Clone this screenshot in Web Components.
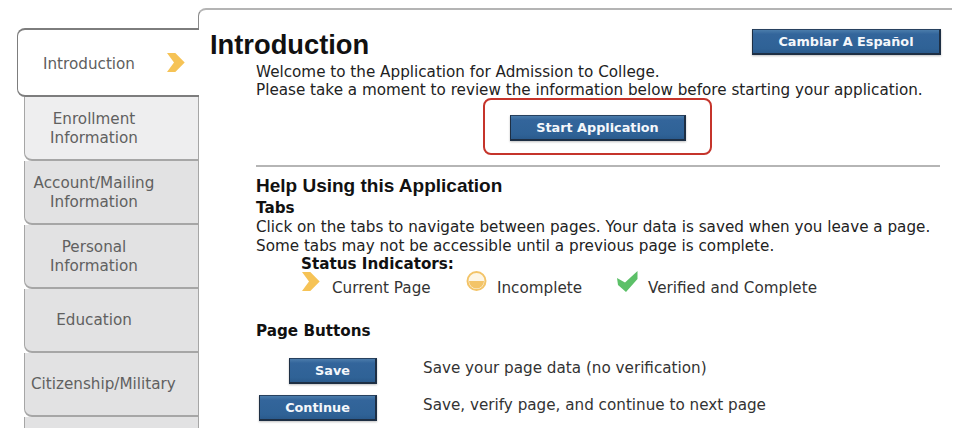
<!DOCTYPE html>
<html>
<head>
<meta charset="utf-8">
<title>Introduction</title>
<style>
html, body { margin: 0; height: 428px; overflow: hidden; background: #fff; }
body { font-family: "DejaVu Sans", Verdana, sans-serif; }
</style>
</head>
<body>
<app-shell>
    <tab-item slot="tabs" active>Introduction</tab-item>
    <tab-item slot="tabs">Enrollment<br>Information</tab-item>
    <tab-item slot="tabs" grey>Account/Mailing<br>Information</tab-item>
    <tab-item slot="tabs" grey>Personal<br>Information</tab-item>
    <tab-item slot="tabs" grey>Education</tab-item>
    <tab-item slot="tabs" grey>Citizenship/Military</tab-item>
    <tab-item slot="tabs" grey></tab-item>

    <page-head>
        Introduction
        <app-button slot="action" w="189">Cambiar A Español</app-button>
    </page-head>
    <intro-text>Welcome to the Application for Admission to College.<br>Please take a moment to review the information below before starting your application.</intro-text>
    <start-box><app-button w="176">Start Application</app-button></start-box>
    <help-section>
        <span slot="title">Help Using this Application</span>
        <span slot="sub">Tabs</span>
        Click on the tabs to navigate between pages. Your data is saved when you leave a page.<br>Some tabs may not be accessible until a previous page is complete.
        <status-row slot="status">
            <span slot="label">Status Indicators:</span>
            <status-item type="current">Current Page</status-item>
            <status-item type="incomplete">Incomplete</status-item>
            <status-item type="done">Verified and Complete</status-item>
        </status-row>
    </help-section>
    <button-head>Page Buttons</button-head>
    <button-help>
        <app-button slot="button" w="88" style="margin-left:33px">Save</app-button>
        Save your page data (no verification)
    </button-help>
    <button-help>
        <app-button slot="button" w="118" style="margin-left:3px">Continue</app-button>
        Save, verify page, and continue to next page
    </button-help>
</app-shell>

<script>
const define = (name, html, ready) => {
    const template = document.createElement('template');
    template.innerHTML = html;
    class Item extends HTMLElement {
        constructor() {
            super();
            this.attachShadow({ mode: 'open' }).appendChild(template.content.cloneNode(true));
        }

        connectedCallback() {
            if (ready) ready(this);
        }
    }
    customElements.define(name, Item);
};

const chevron = '<svg width="20" height="21" viewBox="0 0 20 21"><path d="M1 1h8.300l9.400 9.500-9.400 9.500H1l7-9.500z" fill="#f6c356"/></svg>';

define('app-shell', `
<style>
    :host { display: flex; height: 428px; overflow: hidden; padding-left: 17px; box-sizing: border-box; align-items: flex-start; }
    nav { width: 182px; flex: none; margin-top: 28px; display: flex; flex-direction: column; position: relative; z-index: 1; }
    main { flex: none; width: 754px; height: 420px; margin-top: 8px; box-sizing: border-box; margin-left: -1px;
        border-top: 2px solid #b4b4b4; border-left: 1px solid #8a8a8a; border-top-left-radius: 8px;
        padding: 0 12px 0 11px; color: #222; font-size: 15.2px; line-height: 18px; background: #fff; }
</style>
<nav><slot name="tabs"></slot></nav>
<main><slot></slot></main>
`);

define('tab-item', `
<style>
    :host { display: flex; height: 64px; margin-left: 7px; box-sizing: border-box; align-items: center;
        text-align: center; font-size: 15.2px; line-height: 18.500px; color: #606060; padding: 1px 41px 0 6px; white-space: nowrap;
        background: #eeeeef; border: 1px solid #a6a6a6; border-top: 0; border-bottom-width: 2px; border-radius: 0 0 0 8px; }
    :host([grey]) { background: #e2e2e3; }
    :host([active]) { height: 69px; margin-left: 0; background: #fff; border: 2px solid #7d7d7d; border-right: 0; border-left-width: 1px;
        border-radius: 8px 0 0 8px; padding: 0 13px 0 0; }
    div { flex: 1; min-width: 0; }
    :host([active]) div { padding-top: 4px; }
    svg { display: none; flex: none; margin-left: 6px; margin-top: -1px; }
    :host([active]) svg { display: block; }
</style>
<div><slot></slot></div>${chevron}
`);

define('page-head', `
<style>
    :host { display: flex; justify-content: space-between; align-items: flex-start; padding-top: 18px; height: 35px;
        font: bold 27.3px/34px "Liberation Sans", Arial, sans-serif; color: #111; }
    .act { margin-top: 1px; display: flex; margin-right: -1px; }
</style>
<div><slot></slot></div>
<div class="act"><slot name="action"></slot></div>
`);

define('intro-text', `
<style>
    :host { display: block; margin: 0 0 -1px 46px; }
</style>
<slot></slot>
`);

define('app-button', `
<style>
    :host { display: inline-flex; box-sizing: border-box; height: 26px; align-items: center; justify-content: center;
        background: linear-gradient(#4b7cab 0, #33659b 18%, #2f6296 80%, #2a5a8c 100%); color: #f4f7fb;
        border: 1px solid #1e2f44; border-top-color: #27415f; border-right-width: 2px; border-bottom-width: 2px;
        font: bold 12.8px "DejaVu Sans", Verdana, sans-serif; box-shadow: 0 1px 2px rgba(0,0,0,.25); }
</style>
<slot></slot>
`, (el) => { el.style.width = `${el.getAttribute('w')}px`; });

define('start-box', `
<style>
    :host { display: flex; justify-content: center; align-items: center; box-sizing: border-box; width: 229px; height: 57px; margin: 0 0 0 273px;
        padding: 2px 0 0 1px; border: 2px solid #c5342b; border-radius: 8px; }
</style>
<slot></slot>
`);

define('help-section', `
<style>
    :host { display: block; margin: 10px 0 0 46px; border-top: 2px solid #b5b5b5; padding-top: 8px; color: #222; }
    .title { font: bold 19px/22px "Liberation Sans", Arial, sans-serif; color: #111; }
    .sub { font-weight: bold; line-height: 19px; color: #111; margin-top: 2px; }
    .body { line-height: 19px; }
</style>
<div class="title"><slot name="title"></slot></div>
<div class="sub"><slot name="sub"></slot></div>
<div class="body"><slot></slot></div>
<slot name="status"></slot>
`);

define('status-row', `
<style>
    :host { display: grid; grid-template-columns: 165px 151px auto; margin: -1px 0 0 45px; }
    .label { grid-column: 1 / -1; font-weight: bold; line-height: 18px; color: #111; margin-bottom: 4px; }
</style>
<div class="label"><slot name="label"></slot></div>
<slot></slot>
`);

const statusIcons = {
    current: chevron,
    incomplete: '<svg width="22" height="21" viewBox="0 0 22 21"><circle cx="10.500" cy="10" r="9" fill="#fdf6e6" stroke="#f3c468" stroke-width="2"/><path d="M3 10h15a7.500 7.500 0 0 1-15 0z" fill="#f3c468"/></svg>',
    done: '<svg width="21" height="22" viewBox="0 0 21 22"><path d="M0 7l8 4.500L20.500 0v8L9 21l-8-7z" fill="#5cc068"/></svg>'
};

define('status-item', `
<style>
    :host { display: flex; gap: 11px; align-items: flex-start; line-height: 20px; color: #333; height: 24px; }
    .ic { flex: none; margin-top: -6px; width: 20px; height: 21px; }
    .t { padding-top: 1px; }
</style>
<span class="ic"></span><span class="t"><slot></slot></span>
`, (el) => { el.shadowRoot.querySelector('.ic').innerHTML = statusIcons[el.getAttribute('type')]; });

define('button-head', `
<style>
    :host { display: block; margin: 21px 0 17px 46px; font-weight: bold; line-height: 19px; color: #111; }
</style>
<slot></slot>
`);

define('button-help', `
<style>
    :host { display: grid; grid-template-columns: 167px auto; margin-left: 46px; height: 37px; align-items: start; color: #333; line-height: 20px; }
</style>
<div><slot name="button"></slot></div><div><slot></slot></div>
`);
</script>
</body>
</html>
